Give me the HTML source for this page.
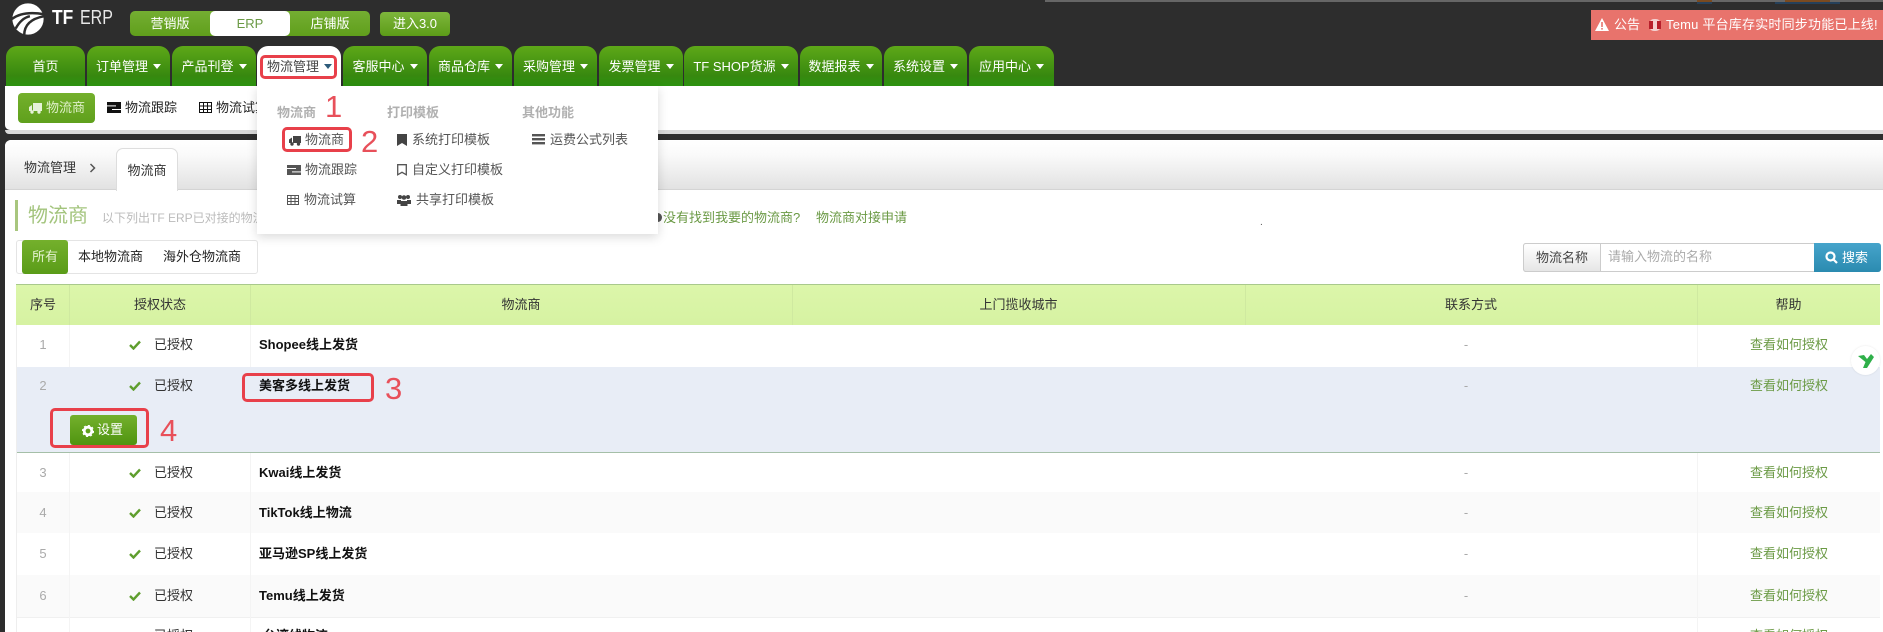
<!DOCTYPE html>
<html style="overflow:hidden;height:632px"><head><meta charset="utf-8"><style>
*{box-sizing:border-box}
html,body{margin:0;padding:0}
body{width:1883px;height:632px;overflow:hidden;position:relative;background:#2d2d2d;font:13px/18px "Liberation Sans","Noto Sans CJK SC",sans-serif;color:#333}
#p{position:absolute;left:0;top:0;width:1883px;height:632px;overflow:hidden;background:#2d2d2d}
.a{position:absolute;white-space:nowrap}
.tab{position:absolute;top:46px;height:40px;border-radius:11px 11px 0 0;background:linear-gradient(#5ea818,#37880f 75%,#2d9210);color:#fff;text-align:center;line-height:41px}
.tab i{display:inline-block;width:0;height:0;border:4px solid transparent;border-top:5px solid #fff;border-bottom:0;margin-left:5px;vertical-align:2px}
.red{position:absolute;border:3px solid #e8404a;border-radius:5px}
.num{position:absolute;color:#e8505a;font:31px/30px "Liberation Sans",sans-serif}
.row{position:absolute;left:16px;width:1864px;background:#fff}
.c{position:absolute;height:18px;white-space:nowrap}
.g{color:#6b9a45}
.bold{font-weight:bold;color:#111}
.grey{color:#aaa}
.dd{color:#555}
</style></head><body><div id="p">
<div class="a" style="left:1045px;top:0;width:838px;height:2px;background:#666"></div>
<div class="a" style="left:1697px;top:0;width:15px;height:2px;background:#7a4a20"></div>
<div class="a" style="left:1697px;top:2px;width:15px;height:2px;background:#25405a"></div>
<div class="a" style="left:1785px;top:0;width:45px;height:2px;background:#7a4a20"></div>
<div class="a" style="left:1775px;top:2px;width:65px;height:2px;background:#25405a"></div>

<!-- logo -->
<svg class="a" style="left:10px;top:2px" width="36" height="34" viewBox="0 0 38 34"><circle cx="19" cy="17" r="16.5" fill="#fff"/><path d="M2 17Q14 8 36 12M15 34Q15 18 36 14M6 27Q12 16 21 14" stroke="#2d2d2d" stroke-width="2.6" fill="none"/></svg>
<div class="a" style="left:52px;top:6px;color:#fff;font:bold 20px/24px 'Liberation Sans',sans-serif;transform:scaleX(.87);transform-origin:0 0">TF</div>
<div class="a" style="left:80px;top:6px;color:#e8e8e8;font:20px/24px 'Liberation Sans',sans-serif;transform:scaleX(.8);transform-origin:0 0">ERP</div>

<!-- switcher -->
<div class="a" style="left:130px;top:11px;width:240px;height:25px;border-radius:5px;background:linear-gradient(#74ae32,#609f1c);color:#fff;line-height:25px;text-align:center">
<span class="a" style="left:0;width:80px">营销版</span>
<span class="a" style="left:80px;width:80px;background:#fff;color:#6b9a45;border-radius:5px;height:25px">ERP</span>
<span class="a" style="left:160px;width:80px">店铺版</span></div>
<div class="a" style="left:380px;top:12px;width:70px;height:24px;border-radius:4px;background:linear-gradient(#7eb63c,#5c9c18);color:#fff;line-height:24px;text-align:center">进入3.0</div>

<!-- notice -->
<div class="a" style="left:1591px;top:10px;width:292px;height:30px;background:#e8736c;color:#fff;line-height:30px;font-size:13px">
<svg class="a" style="left:4px;top:8px" width="14" height="13" viewBox="0 0 14 13"><path d="M7 0L14 13H0Z" fill="#fff"/><rect x="6.2" y="4" width="1.6" height="5" fill="#e8736c"/><rect x="6.2" y="10" width="1.6" height="1.6" fill="#e8736c"/></svg>
<span class="a" style="left:23px">公告</span>
<svg class="a" style="left:57px;top:8px" width="14" height="14"><rect x="1" y="1" width="12" height="12" rx="5" fill="#f4d0d0"/><rect x="1" y="3" width="4" height="8" fill="#b8202c"/><rect x="9" y="3" width="4" height="8" fill="#b8202c"/></svg>
<span class="a" style="left:75px;letter-spacing:.2px">Temu 平台库存实时同步功能已上线!</span></div>

<!-- white band under nav -->
<div class="a" style="left:5px;top:86px;width:1878px;height:44px;background:#fff;border-radius:0 0 0 5px"></div>
<div class="a" style="left:5px;top:130px;width:1878px;height:4px;background:#d8d8d8;border-radius:0 0 0 5px"></div>
<!-- content panel -->
<div class="a" style="left:5px;top:140px;width:1878px;height:492px;background:#fff;border-radius:6px 0 0 0"></div>
<div class="a" style="left:5px;top:140px;width:1878px;height:50px;background:linear-gradient(#fff,#fafafa 30%,#e2e2e2);border-bottom:1px solid #d4d4d4;border-radius:6px 0 0 0"></div>

<!-- tabs -->
<div class="tab" style="left:6px;width:79px">首页</div>
<div class="tab" style="left:87px;width:83px">订单管理<i></i></div>
<div class="tab" style="left:172px;width:84px">产品刊登<i></i></div>
<div class="tab" style="left:343px;width:84px">客服中心<i></i></div>
<div class="tab" style="left:429px;width:83px">商品仓库<i></i></div>
<div class="tab" style="left:514px;width:83px">采购管理<i></i></div>
<div class="tab" style="left:599px;width:84px">发票管理<i></i></div>
<div class="tab" style="left:684px;width:114px">TF SHOP货源<i></i></div>
<div class="tab" style="left:800px;width:82px">数据报表<i></i></div>
<div class="tab" style="left:884px;width:83px">系统设置<i></i></div>
<div class="tab" style="left:969px;width:85px">应用中心<i></i></div>

<!-- subnav -->
<div class="a" style="left:18px;top:93px;width:77px;height:30px;border-radius:4px;background:linear-gradient(#74b02c,#5fa01c);color:#dff0c8;line-height:30px;padding-left:28px">物流商</div>
<svg class="a" style="left:28px;top:102px" width="15" height="12"><path d="M5 1H14V9H5ZM1 5L4 3V9H1Z" fill="#e6f2d8"/><circle cx="4" cy="10" r="1.7" fill="#e6f2d8"/><circle cx="11" cy="10" r="1.7" fill="#e6f2d8"/></svg>
<svg class="a" style="left:107px;top:102px" width="14" height="11"><rect width="14" height="11" fill="#111"/><rect y="3.4" width="9" height="1" fill="#fff"/><rect x="5" y="7" width="9" height="1" fill="#fff"/></svg>
<div class="a" style="left:125px;top:99px;color:#222">物流跟踪</div>
<svg class="a" style="left:199px;top:102px" width="13" height="11" fill="none" stroke="#111"><rect x=".5" y=".5" width="12" height="10"/><path d="M0 4H13M0 7.5H13M4.5 0V11M8.5 0V11"/></svg>
<div class="a" style="left:216px;top:99px;color:#222">物流试算</div>

<!-- breadcrumb -->
<div class="a" style="left:24px;top:159px;color:#333">物流管理</div>
<svg class="a" style="left:89px;top:163px" width="7" height="10"><path d="M1.5 1L5.5 5L1.5 9" fill="none" stroke="#555" stroke-width="1.5"/></svg>
<div class="a" style="left:116px;top:148px;width:62px;height:43px;background:#fff;border:1px solid #ddd;border-bottom:0;border-radius:7px 7px 0 0;text-align:center;line-height:43px">物流商</div>

<!-- title -->
<div class="a" style="left:15px;top:200px;width:3px;height:31px;background:#a8c67e"></div>
<div class="a" style="left:28px;top:202px;color:#a3c47d;font-size:20px;line-height:28px">物流商</div>
<div class="a" style="left:102px;top:209px;color:#bbb;font-size:12px">以下列出TF ERP已对接的物流商</div>
<div class="a" style="left:654px;top:213px;width:8px;height:9px;border-radius:50%;background:#555"></div>
<div class="a g" style="left:663px;top:209px">没有找到我要的物流商?</div>
<div class="a g" style="left:816px;top:209px">物流商对接申请</div>
<div class="a" style="left:1260px;top:214px;color:#555;font-size:10px">.</div>

<!-- filter -->
<div class="a" style="left:16px;top:240px;width:242px;height:34px;border:1px solid #e4e4e4;border-radius:3px;background:#fff"></div>
<div class="a" style="left:22px;top:240px;width:46px;height:34px;border-radius:3px;background:linear-gradient(#74b02c,#5a9c18);color:#e4f2d0;line-height:34px;text-align:center">所有</div>
<div class="a" style="left:78px;top:248px;color:#222">本地物流商</div>
<div class="a" style="left:163px;top:248px;color:#222">海外仓物流商</div>

<!-- search -->
<div class="a" style="left:1523px;top:243px;width:358px;height:29px;border:1px solid #ccc;border-radius:3px;background:#fff"></div>
<div class="a" style="left:1523px;top:243px;width:78px;height:29px;border:1px solid #ccc;border-radius:3px 0 0 3px;background:linear-gradient(#fff,#e6e6e6);line-height:27px;text-align:center;color:#444">物流名称</div>
<div class="a" style="left:1608px;top:248px;color:#aaa">请输入物流的名称</div>
<div class="a" style="left:1814px;top:243px;width:67px;height:29px;background:linear-gradient(#46a4cb,#2b8bb0);border-radius:0 3px 3px 0;color:#fff;line-height:29px;padding-left:28px">搜索</div>
<svg class="a" style="left:1825px;top:251px" width="13" height="13" fill="none" stroke="#fff" stroke-width="2.2"><circle cx="5.5" cy="5.5" r="4"/><path d="M8.5 8.5L12 12"/></svg>

<!-- table header -->
<div class="a" style="left:16px;top:284px;width:1864px;height:41px;background:linear-gradient(#dcf6aa,#d6f2a2);border-top:1px solid #a9c98c"></div>
<div class="a" style="left:69px;top:285px;width:1px;height:40px;background:#cfe9a0"></div>
<div class="a" style="left:250px;top:285px;width:1px;height:40px;background:#cfe9a0"></div>
<div class="a" style="left:792px;top:285px;width:1px;height:40px;background:#cfe9a0"></div>
<div class="a" style="left:1245px;top:285px;width:1px;height:40px;background:#cfe9a0"></div>
<div class="a" style="left:1697px;top:285px;width:1px;height:40px;background:#cfe9a0"></div>
<div class="a" style="left:16px;top:296px;width:54px;text-align:center">序号</div>
<div class="a" style="left:70px;top:296px;width:180px;text-align:center">授权状态</div>
<div class="a" style="left:250px;top:296px;width:542px;text-align:center">物流商</div>
<div class="a" style="left:792px;top:296px;width:453px;text-align:center">上门揽收城市</div>
<div class="a" style="left:1245px;top:296px;width:452px;text-align:center">联系方式</div>
<div class="a" style="left:1697px;top:296px;width:183px;text-align:center">帮助</div>

<!-- rows -->
<div class="row" style="top:325px;height:42px"></div>
<div class="row" style="top:367px;height:86px;background:#e8edf6;border-bottom:1px solid #a5bfa8"></div>
<div class="row" style="top:453px;height:39px"></div>
<div class="row" style="top:492px;height:41px;background:#fafafa"></div>
<div class="row" style="top:533px;height:42px"></div>
<div class="row" style="top:575px;height:42px;background:#fafafa"></div>
<div class="row" style="top:617px;height:15px;border-top:1px solid #f0f0f0"></div>
<div class="a" style="left:16px;top:325px;width:1px;height:307px;background:#eee"></div>
<div class="a" style="left:69px;top:325px;width:1px;height:42px;background:#f4f4f4"></div>
<div class="a" style="left:69px;top:453px;width:1px;height:179px;background:#f4f4f4"></div>
<div class="a" style="left:250px;top:325px;width:1px;height:42px;background:#f4f4f4"></div>
<div class="a" style="left:250px;top:453px;width:1px;height:179px;background:#f4f4f4"></div>
<div class="a" style="left:1697px;top:325px;width:1px;height:42px;background:#f4f4f4"></div>
<div class="a" style="left:1697px;top:453px;width:1px;height:179px;background:#f4f4f4"></div>

<!-- row contents -->
<div class="c grey" style="left:16px;top:336px;width:54px;text-align:center">1</div>
<div class="c grey" style="left:16px;top:377px;width:54px;text-align:center">2</div>
<div class="c grey" style="left:16px;top:464px;width:54px;text-align:center">3</div>
<div class="c grey" style="left:16px;top:504px;width:54px;text-align:center">4</div>
<div class="c grey" style="left:16px;top:545px;width:54px;text-align:center">5</div>
<div class="c grey" style="left:16px;top:587px;width:54px;text-align:center">6</div>

<svg class="a" style="left:129px;top:340px" width="12" height="10"><path d="M1 5L4.5 8.5L11 1.5" fill="none" stroke="#5f9e2e" stroke-width="2.4"/></svg>
<svg class="a" style="left:129px;top:381px" width="12" height="10"><path d="M1 5L4.5 8.5L11 1.5" fill="none" stroke="#5f9e2e" stroke-width="2.4"/></svg>
<svg class="a" style="left:129px;top:468px" width="12" height="10"><path d="M1 5L4.5 8.5L11 1.5" fill="none" stroke="#5f9e2e" stroke-width="2.4"/></svg>
<svg class="a" style="left:129px;top:508px" width="12" height="10"><path d="M1 5L4.5 8.5L11 1.5" fill="none" stroke="#5f9e2e" stroke-width="2.4"/></svg>
<svg class="a" style="left:129px;top:549px" width="12" height="10"><path d="M1 5L4.5 8.5L11 1.5" fill="none" stroke="#5f9e2e" stroke-width="2.4"/></svg>
<svg class="a" style="left:129px;top:591px" width="12" height="10"><path d="M1 5L4.5 8.5L11 1.5" fill="none" stroke="#5f9e2e" stroke-width="2.4"/></svg>

<div class="c" style="left:154px;top:336px">已授权</div>
<div class="c" style="left:154px;top:377px">已授权</div>
<div class="c" style="left:154px;top:464px">已授权</div>
<div class="c" style="left:154px;top:504px">已授权</div>
<div class="c" style="left:154px;top:545px">已授权</div>
<div class="c" style="left:154px;top:587px">已授权</div>
<div class="c" style="left:154px;top:627px">已授权</div>

<div class="c bold" style="left:259px;top:336px">Shopee线上发货</div>
<div class="c bold" style="left:259px;top:377px">美客多线上发货</div>
<div class="c bold" style="left:259px;top:464px">Kwai线上发货</div>
<div class="c bold" style="left:259px;top:504px">TikTok线上物流</div>
<div class="c bold" style="left:259px;top:545px">亚马逊SP线上发货</div>
<div class="c bold" style="left:259px;top:587px">Temu线上发货</div>
<div class="c bold" style="left:263px;top:627px">台湾线物流</div>

<div class="c grey" style="left:1240px;top:336px;width:452px;text-align:center">-</div>
<div class="c grey" style="left:1240px;top:377px;width:452px;text-align:center">-</div>
<div class="c grey" style="left:1240px;top:464px;width:452px;text-align:center">-</div>
<div class="c grey" style="left:1240px;top:504px;width:452px;text-align:center">-</div>
<div class="c grey" style="left:1240px;top:545px;width:452px;text-align:center">-</div>
<div class="c grey" style="left:1240px;top:587px;width:452px;text-align:center">-</div>

<div class="c g" style="left:1750px;top:336px">查看如何授权</div>
<div class="c g" style="left:1750px;top:377px">查看如何授权</div>
<div class="c g" style="left:1750px;top:464px">查看如何授权</div>
<div class="c g" style="left:1750px;top:504px">查看如何授权</div>
<div class="c g" style="left:1750px;top:545px">查看如何授权</div>
<div class="c g" style="left:1750px;top:587px">查看如何授权</div>
<div class="c g" style="left:1750px;top:627px">查看如何授权</div>

<!-- set button -->
<div class="a" style="left:70px;top:415px;width:67px;height:30px;border-radius:3px;background:linear-gradient(#74b02c,#4f9410);color:#fff;line-height:30px;padding-left:27px">设置</div>
<svg class="a" style="left:82px;top:425px" width="12" height="12"><circle cx="6" cy="6" r="3.8" fill="none" stroke="#fff" stroke-width="2.8"/><circle cx="6" cy="6" r="5.4" fill="none" stroke="#fff" stroke-width="1.4" stroke-dasharray="2 2.2"/></svg>

<!-- chat widget -->
<div class="a" style="left:1851px;top:346px;width:29px;height:29px;border-radius:50%;background:#fff;box-shadow:0 0 2px rgba(0,0,0,.1)"></div>
<svg class="a" style="left:1858px;top:354px" width="16" height="14"><path d="M0 2L6 1L9 5L13 0L16 3L9 14L5 14L7.5 8Z" fill="#2fb04a"/></svg>

<!-- active tab and dropdown -->
<div class="a" style="left:257px;top:86px;width:401px;height:148px;background:#fff;box-shadow:0 3px 10px rgba(0,0,0,.15)"></div>
<div class="a" style="left:257px;top:46px;width:84px;height:44px;background:#fff;border-radius:11px 11px 0 0;color:#444;line-height:41px;padding-left:10px">物流管理<i style="display:inline-block;border:4px solid transparent;border-top:5px solid #2d5b7a;border-bottom:0;margin-left:5px;vertical-align:2px"></i></div>

<div class="a" style="left:277px;top:104px;color:#b0b0b0;font-weight:bold;">物流商</div>
<div class="a" style="left:387px;top:104px;color:#b0b0b0;font-weight:bold;">打印模板</div>
<div class="a" style="left:522px;top:104px;color:#b0b0b0;font-weight:bold;">其他功能</div>

<div class="a dd" style="left:305px;top:131px">物流商</div>
<div class="a dd" style="left:305px;top:161px">物流跟踪</div>
<div class="a dd" style="left:304px;top:191px">物流试算</div>
<div class="a dd" style="left:412px;top:131px">系统打印模板</div>
<div class="a dd" style="left:412px;top:161px">自定义打印模板</div>
<div class="a dd" style="left:416px;top:191px">共享打印模板</div>
<div class="a dd" style="left:550px;top:131px">运费公式列表</div>

<svg class="a" style="left:288px;top:135px" width="14" height="11"><path d="M5 1H13V8H5ZM1 4.5L4 2.5V8H1Z" fill="#444"/><circle cx="4" cy="9" r="1.7" fill="#444"/><circle cx="10.5" cy="9" r="1.7" fill="#444"/></svg>
<svg class="a" style="left:287px;top:165px" width="14" height="10"><rect width="14" height="10" fill="#555"/><rect y="3" width="9" height="1" fill="#fff"/><rect x="5" y="6.4" width="9" height="1" fill="#fff"/></svg>
<svg class="a" style="left:287px;top:195px" width="12" height="10" fill="none" stroke="#555"><rect x=".5" y=".5" width="11" height="9"/><path d="M0 3.5H12M0 6.5H12M4 0V10M8 0V10"/></svg>
<svg class="a" style="left:397px;top:134px" width="10" height="12"><path d="M0 0H10V12L5 9L0 12Z" fill="#444"/></svg>
<svg class="a" style="left:397px;top:164px" width="10" height="12"><path d="M.7 .7H9.3V10.8L5 8.3L.7 10.8Z" fill="none" stroke="#555" stroke-width="1.3"/></svg>
<svg class="a" style="left:397px;top:194px" width="14" height="12" fill="#444"><circle cx="3" cy="3" r="2"/><circle cx="11" cy="3" r="2"/><circle cx="7" cy="3.5" r="2.3"/><path d="M0 6H4V10H0ZM10 6H14V10H10ZM3.5 7H10.5V12H3.5Z"/></svg>
<svg class="a" style="left:532px;top:134px" width="13" height="11" fill="#555"><rect width="13" height="2.4"/><rect y="4" width="13" height="2.4"/><rect y="8" width="13" height="2.4"/></svg>

<!-- annotations -->
<div class="red" style="left:260px;top:55px;width:77px;height:24px"></div>
<div class="red" style="left:282px;top:127px;width:70px;height:25px"></div>
<div class="red" style="left:242px;top:373px;width:132px;height:29px"></div>
<div class="red" style="left:50px;top:408px;width:99px;height:40px"></div>
<div class="num" style="left:325px;top:92px">1</div>
<div class="num" style="left:361px;top:127px">2</div>
<div class="num" style="left:385px;top:374px">3</div>
<div class="num" style="left:160px;top:416px">4</div>
</div></body></html>
